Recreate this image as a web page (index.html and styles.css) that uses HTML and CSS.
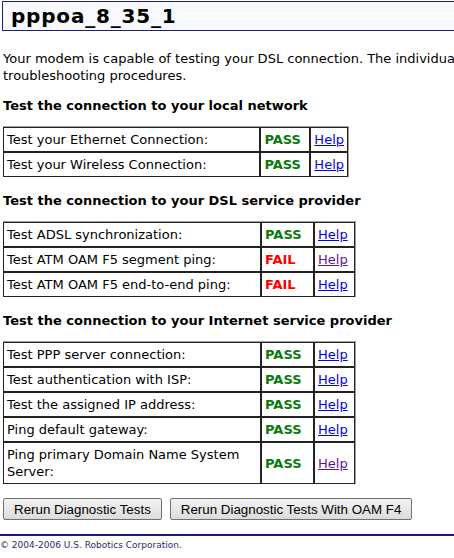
FILE: index.html
```html
<!DOCTYPE html>
<html>
    <head lang="en">
        <meta charset="UTF-8">
        <title>Diagnostics</title>
        <link rel="stylesheet" href="styles.css">
    </head>
    <body>
        <div id="title">pppoa_8_35_1</div>
        <div id="main">
            <p class="intro">Your modem is capable of testing your DSL connection. The individual tests are listed below. If a test fails, see the Help link for<br>troubleshooting procedures.</p>

            <h3 class="first">Test the connection to your local network</h3>
            <table class="diag t1">
                <tr><td class="name">Test your Ethernet Connection:</td><td class="pass">PASS</td><td class="help"><a href="#">Help</a></td></tr>
                <tr><td class="name">Test your Wireless Connection:</td><td class="pass">PASS</td><td class="help"><a href="#">Help</a></td></tr>
            </table>

            <h3>Test the connection to your DSL service provider</h3>
            <table class="diag">
                <tr><td class="name">Test ADSL synchronization:</td><td class="pass">PASS</td><td class="help"><a href="#">Help</a></td></tr>
                <tr><td class="name">Test ATM OAM F5 segment ping:</td><td class="fail">FAIL</td><td class="help"><a class="visited" href="#">Help</a></td></tr>
                <tr><td class="name">Test ATM OAM F5 end-to-end ping:</td><td class="fail">FAIL</td><td class="help"><a href="#">Help</a></td></tr>
            </table>

            <h3>Test the connection to your Internet service provider</h3>
            <table class="diag">
                <tr><td class="name">Test PPP server connection:</td><td class="pass">PASS</td><td class="help"><a href="#">Help</a></td></tr>
                <tr><td class="name">Test authentication with ISP:</td><td class="pass">PASS</td><td class="help"><a href="#">Help</a></td></tr>
                <tr><td class="name">Test the assigned IP address:</td><td class="pass">PASS</td><td class="help"><a href="#">Help</a></td></tr>
                <tr><td class="name">Ping default gateway:</td><td class="pass">PASS</td><td class="help"><a href="#">Help</a></td></tr>
                <tr><td class="name">Ping primary Domain Name System Server:</td><td class="pass">PASS</td><td class="help"><a class="visited" href="#">Help</a></td></tr>
            </table>

            <div id="buttons">
                <button>Rerun Diagnostic Tests</button>
                <button>Rerun Diagnostic Tests With OAM F4</button>
            </div>
        </div>
        <div id="footer">&copy; 2004-2006 U.S. Robotics Corporation.</div>
    </body>
</html>
```

FILE: styles.css
```css
* {
    margin: 0;
    padding: 0;
}
body {
    width: 700px;
    font-family: "DejaVu Sans", Verdana, sans-serif;
    font-size: 13px;
    color: #000;
    background: #fff;
}
#title {
    margin: 1px 0 0 2px;
    height: 28px;
    border: 1px solid #20207a;
    background: #f8f8ff;
    font-size: 20px;
    font-weight: bold;
    letter-spacing: 0.8px;
    line-height: 28px;
    padding-left: 8px;
}
#main {
    padding-left: 3px;
}
.intro {
    margin-top: 19px;
    line-height: 17px;
    white-space: nowrap;
}
h3 {
    font-size: 13px;
    font-weight: bold;
    margin: 16px 0 12px 0;
    line-height: 16px;
}
h3.first {
    margin-top: 14px;
}
table.diag {
    border-collapse: separate;
    border-spacing: 0;
    border-top: 1px solid #a0a0a0;
    border-right: 1px solid #a0a0a0;
    width: 353px;
}
table.t1 {
    width: 346px;
}
table.diag td {
    border: 1px solid #222;
    padding: 3px 3px;
    line-height: 17px;
}
td.name {
    width: 250px;
}
td.pass, td.fail {
    font-weight: bold;
    padding-left: 7px;
    width: 45px;
}
table.t1 td.pass {
    width: 42px;
}
td.pass {
    color: #0a7a0a;
}
td.fail {
    color: #ff0000;
}
td.help {
    padding-left: 2px;
}
a {
    color: #0000ee;
}
a.visited {
    color: #551a8b;
}
#buttons {
    margin-top: 14px;
    display: flex;
    gap: 8px;
}
#buttons button {
    font-family: "Liberation Sans", Arial, sans-serif;
    font-size: 13.33px;
    height: 22px;
    padding: 0 10px;
    border: 1px solid #707070;
    border-radius: 2px;
    background: linear-gradient(#f2f2f2, #dcdcdc);
    color: #000;
}
#footer {
    margin-top: 14px;
    border-top: 2px solid #1c1c70;
    padding-top: 4px;
    font-size: 9px;
    color: #2a2a6a;
}
```
